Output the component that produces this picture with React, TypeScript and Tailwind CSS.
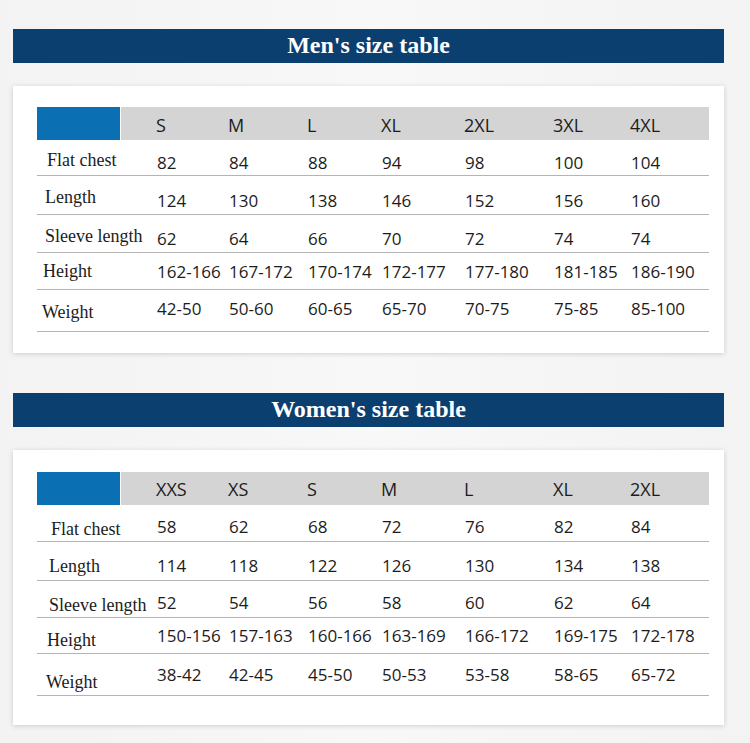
import React from 'react';

interface SizeRow {
  label: string;
  values: string[];
  height: string;
  labelPad: string;
  valuePad: string;
}

interface SizeTableProps {
  title: string;
  sizes: string[];
  headerPad: string;
  rows: SizeRow[];
  cardPad: string;
}

const serif = "font-['Liberation_Serif','Times_New_Roman',serif]";
const sans = "font-['Open_Sans','Noto_Sans',sans-serif]";
const cols =
  'grid grid-cols-[117px_72px_79px_74px_83px_89px_77px_81px]';

const menRows: SizeRow[] = [
  {
    label: 'Flat chest',
    values: ['82', '84', '88', '94', '98', '100', '104'],
    height: 'h-[36px]',
    labelPad: 'pl-[10px] pb-[6px]',
    valuePad: 'pb-[4px]',
  },
  {
    label: 'Length',
    values: ['124', '130', '138', '146', '152', '156', '160'],
    height: 'h-[39px]',
    labelPad: 'pl-[8px] pb-[8px]',
    valuePad: 'pb-[5px]',
  },
  {
    label: 'Sleeve length',
    values: ['62', '64', '66', '70', '72', '74', '74'],
    height: 'h-[38px]',
    labelPad: 'pl-[8px] pb-[7px]',
    valuePad: 'pb-[5px]',
  },
  {
    label: 'Height',
    values: [
      '162-166',
      '167-172',
      '170-174',
      '172-177',
      '177-180',
      '181-185',
      '186-190',
    ],
    height: 'h-[37px]',
    labelPad: 'pl-[6px] pb-[9px]',
    valuePad: 'pb-[9px]',
  },
  {
    label: 'Weight',
    values: ['42-50', '50-60', '60-65', '65-70', '70-75', '75-85', '85-100'],
    height: 'h-[42px]',
    labelPad: 'pl-[5px] pb-[10px]',
    valuePad: 'pb-[14px]',
  },
];

const womenRows: SizeRow[] = [
  {
    label: 'Flat chest',
    values: ['58', '62', '68', '72', '76', '82', '84'],
    height: 'h-[37px]',
    labelPad: 'pl-[14px] pb-[3px]',
    valuePad: 'pb-[6px]',
  },
  {
    label: 'Length',
    values: ['114', '118', '122', '126', '130', '134', '138'],
    height: 'h-[39px]',
    labelPad: 'pl-[12px] pb-[5px]',
    valuePad: 'pb-[6px]',
  },
  {
    label: 'Sleeve length',
    values: ['52', '54', '56', '58', '60', '62', '64'],
    height: 'h-[37px]',
    labelPad: 'pl-[12px] pb-[3px]',
    valuePad: 'pb-[6px]',
  },
  {
    label: 'Height',
    values: [
      '150-156',
      '157-163',
      '160-166',
      '163-169',
      '166-172',
      '169-175',
      '172-178',
    ],
    height: 'h-[36px]',
    labelPad: 'pl-[10px] pb-[4px]',
    valuePad: 'pb-[9px]',
  },
  {
    label: 'Weight',
    values: ['38-42', '42-45', '45-50', '50-53', '53-58', '58-65', '65-72'],
    height: 'h-[42px]',
    labelPad: 'pl-[9px] pb-[4px]',
    valuePad: 'pb-[12px]',
  },
];

const SizeTable = ({ title, sizes, headerPad, rows, cardPad }: SizeTableProps) => {
  return (
    <section className="flex flex-col">
      <div className="h-[34px] bg-[#0b3f6f] flex items-center justify-center pb-[3px]">
        <h2 className={`${serif} text-[24px] font-bold text-white leading-none`}>
          {title}
        </h2>
      </div>
      <div
        className={`mt-[23px] bg-white shadow-[0_1px_5px_rgba(0,0,0,0.16)] pl-[24px] pr-[15px] ${cardPad}`}
      >
        <div className={`${cols} h-[33px]`}>
          <div className="flex">
            <div className="w-[83px] bg-[#0a70b3]" />
            <div className="ml-px flex-1 bg-[#d4d4d4]" />
          </div>
          {sizes.map((size) => (
            <div
              key={size}
              className={`bg-[#d4d4d4] flex items-end pl-[2px] ${headerPad} ${sans} text-[18px] leading-none text-[#1c1c1c]`}
            >
              {size}
            </div>
          ))}
        </div>
        {rows.map((row) => (
          <div
            key={row.label}
            className={`${cols} ${row.height} border-b border-[#b4b4b4]`}
          >
            <div
              className={`flex items-end ${row.labelPad} ${serif} text-[18px] leading-none text-[#1c1c1c]`}
            >
              {row.label}
            </div>
            {row.values.map((value, i) => (
              <div
                key={i}
                className={`flex items-end pl-[3px] ${row.valuePad} ${sans} text-[17px] leading-none text-[#1c1c1c] whitespace-nowrap`}
              >
                {value}
              </div>
            ))}
          </div>
        ))}
      </div>
    </section>
  );
};

const App = () => {
  return (
    <div className="w-[750px] h-[743px] overflow-hidden bg-[#f4f4f4] bg-gradient-to-r from-[#f3f3f3] via-[#f8f8f8] to-[#f3f3f3] pt-[29px] pl-[13px] pr-[26px] flex flex-col">
      <SizeTable
        title="Men's size table"
        sizes={['S', 'M', 'L', 'XL', '2XL', '3XL', '4XL']}
        headerPad="pb-[6px]"
        rows={menRows}
        cardPad="pt-[21px] pb-[21px]"
      />
      <div className="h-[40px]" />
      <SizeTable
        title="Women's size table"
        sizes={['XXS', 'XS', 'S', 'M', 'L', 'XL', '2XL']}
        headerPad="pb-[7px]"
        rows={womenRows}
        cardPad="pt-[22px] pb-[29px]"
      />
    </div>
  );
};

export default App;
